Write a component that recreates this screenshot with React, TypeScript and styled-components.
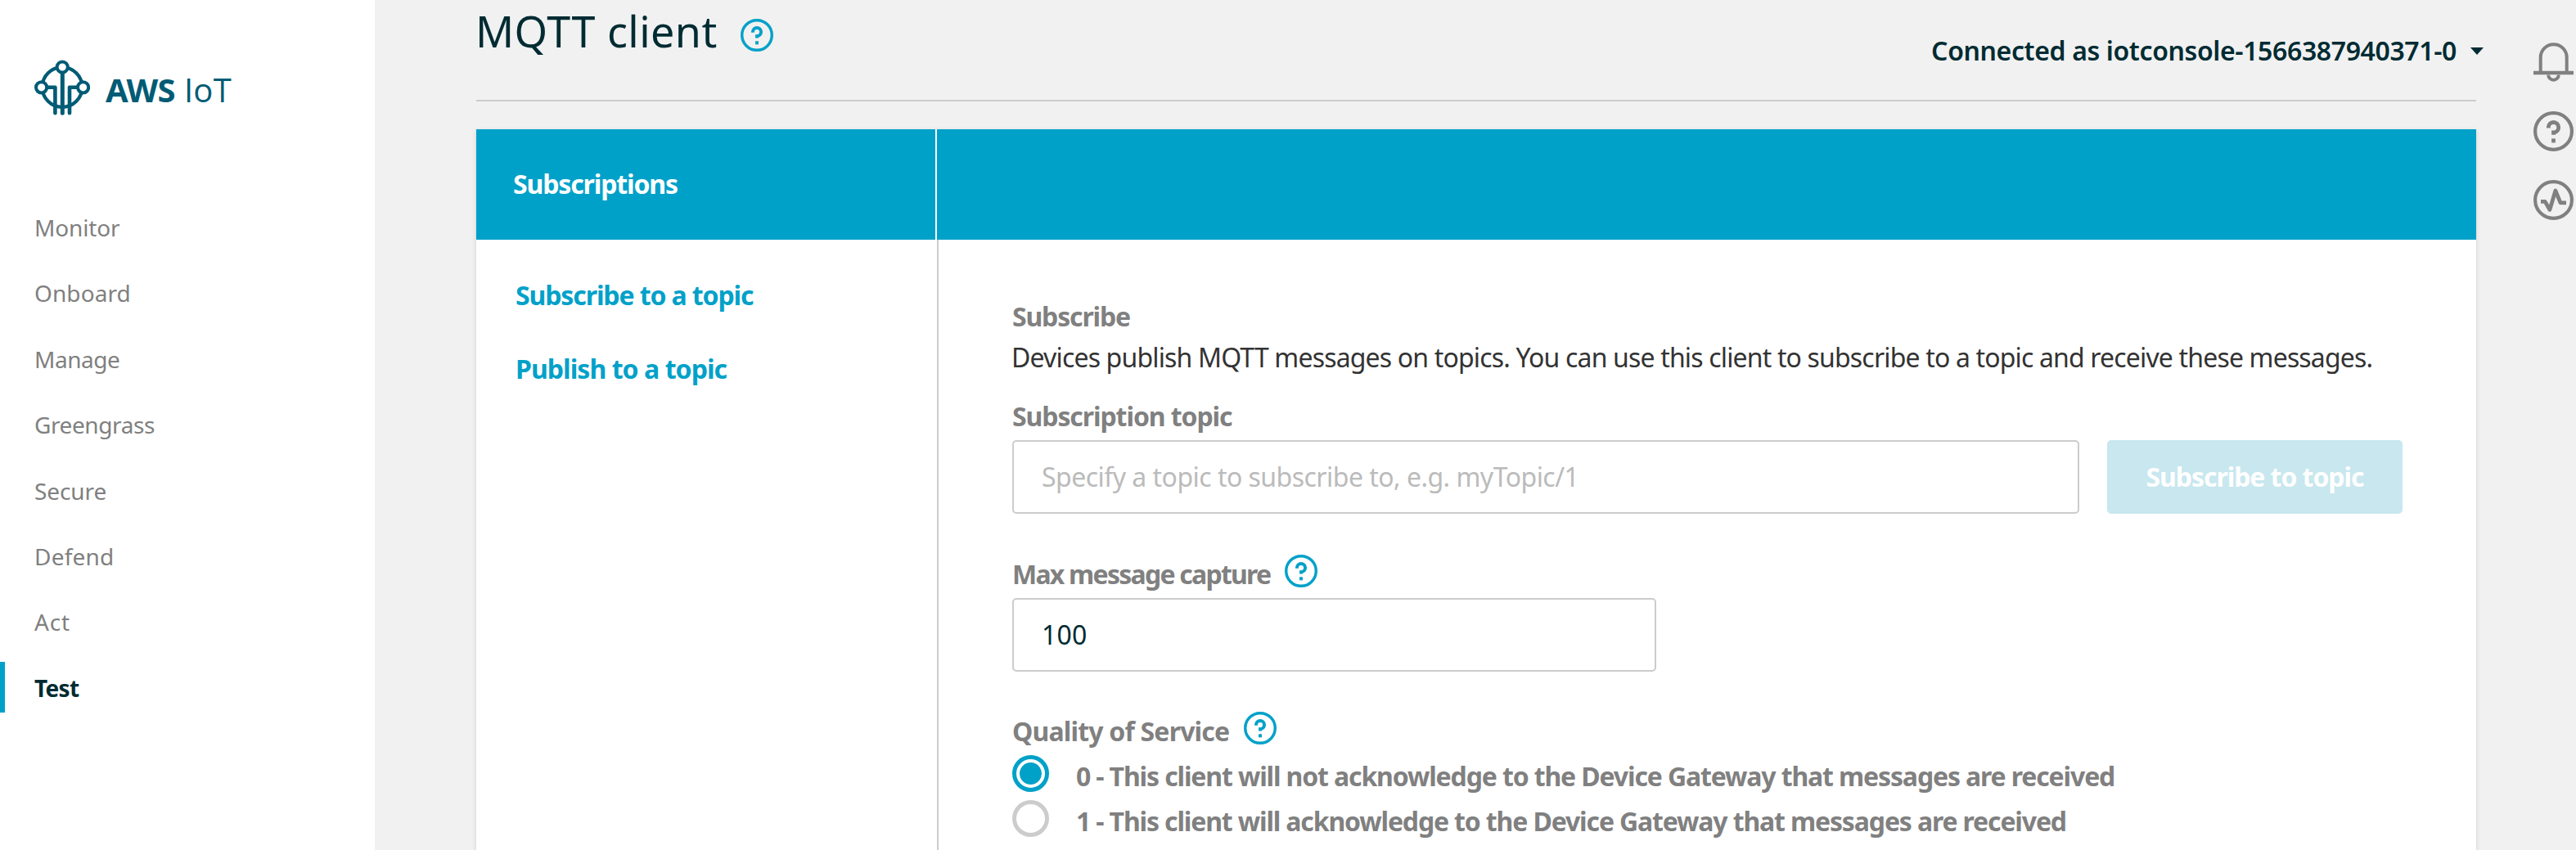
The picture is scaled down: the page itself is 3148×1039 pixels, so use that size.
import React from "react";
import styled, { createGlobalStyle } from "styled-components";

const teal = "#00a1c9";
const ink = "#002b32";
const grey = "#808080";
const line = "#cccccc";

const GlobalStyle = createGlobalStyle`
  * { box-sizing: border-box; }
  body {
    margin: 0;
    background: #f1f1f1;
    font-family: "Noto Sans", "Open Sans", sans-serif;
    font-size: 32px;
    color: ${ink};
  }
`;

const Page = styled.div`
  display: flex;
  height: 1039px;
  overflow: hidden;
`;

const Sidebar = styled.aside`
  flex: 0 0 458px;
  background: #fff;
  padding-top: 73px;
`;

const Logo = styled.div`
  display: flex;
  height: 68px;
  padding-left: 42px;
  color: #005b75;
  font-size: 40px;
  line-height: 74px;
`;

const LogoBold = styled.span`
  margin-left: 19px;
  font-weight: 700;
  letter-spacing: -0.6px;
`;

const LogoLight = styled.span`
  margin-left: 11px;
  font-family: "Open Sans", sans-serif;
  letter-spacing: 0.2px;
`;

const Nav = styled.nav`
  display: flex;
  flex-direction: column;
  gap: 18.4px;
  margin-top: 105px;
`;

const NavItem = styled.a<{ $active?: boolean; $track: number }>`
  height: 62px;
  padding: 1px 0 0 36px;
  border-left: 6px solid ${(p) => (p.$active ? teal : "transparent")};
  color: ${(p) => (p.$active ? ink : grey)};
  font-size: 28px;
  font-weight: ${(p) => (p.$active ? 700 : 400)};
  line-height: 62px;
  letter-spacing: ${(p) => p.$track}px;
`;

const Main = styled.main`
  flex: 1;
  display: flex;
  flex-direction: column;
  padding-left: 124px;
`;

const Header = styled.header`
  display: flex;
  justify-content: space-between;
  height: 124px;
  border-bottom: 2px solid ${line};
`;

const TitleGroup = styled.div`
  display: flex;
  align-items: center;
  height: 60px;
  margin-top: 8px;
  svg { margin: 9px 0 0 28px; }
`;

const Title = styled.h1`
  margin: 0 0 0 -1px;
  font-size: 52px;
  font-weight: 400;
  line-height: 60px;
  letter-spacing: 0.46px;
`;

const Connection = styled.div`
  display: flex;
  align-items: center;
  height: 50px;
  margin: 37px -9px 0 0;
  font-weight: 600;
  line-height: 50px;
  letter-spacing: -0.38px;
`;

const Caret = styled.span`
  margin-left: 17px;
  border: 8px solid transparent;
  border-top: 9px solid ${ink};
  border-bottom: 0;
`;

const Card = styled.section`
  flex: 1;
  display: flex;
  flex-direction: column;
  margin-top: 34px;
  background: #fff;
  box-shadow: 0 2px 6px rgba(0, 0, 0, 0.14);
`;

const CardHeader = styled.div`
  height: 135px;
  background: ${teal};
`;

const HeaderCell = styled.h2`
  width: 563px;
  height: 135px;
  margin: 0;
  padding-left: 45px;
  border-right: 2px solid #fff;
  color: #fff;
  font-size: 32px;
  font-weight: 700;
  line-height: 133px;
  letter-spacing: -1.13px;
`;

const CardBody = styled.div`
  flex: 1;
  display: flex;
`;

const LinkList = styled.div`
  width: 565px;
  display: flex;
  flex-direction: column;
  gap: 50px;
  padding: 48px 0 0 48px;
  border-right: 2px solid ${line};
`;

const TopicLink = styled.a<{ $track: number }>`
  color: ${teal};
  font-weight: 700;
  line-height: 40px;
  letter-spacing: ${(p) => p.$track}px;
`;

const Form = styled.div`
  flex: 1;
  padding: 69px 90px 0;
`;

const SectionTitle = styled.h3`
  margin: 0;
  color: ${grey};
  font-size: 32px;
  font-weight: 700;
  line-height: 50px;
  letter-spacing: -1.17px;
`;

const Description = styled.p`
  margin: 0 -40px 23px -1px;
  color: #333;
  line-height: 49px;
  letter-spacing: -0.84px;
  white-space: nowrap;
`;

const Label = styled.label<{ $track: number }>`
  display: flex;
  height: 54px;
  color: ${grey};
  font-weight: 700;
  line-height: 50px;
  letter-spacing: ${(p) => p.$track}px;
  svg { margin: 1px 0 0 18px; }
`;

const FieldRow = styled.div<{ $gap: number }>`
  display: flex;
  gap: 34px;
  margin-bottom: ${(p) => p.$gap}px;
`;

const TextInput = styled.input<{ $width?: string; $track?: number }>`
  width: ${(p) => p.$width ?? "auto"};
  flex: ${(p) => (p.$width ? "none" : "1")};
  height: 90px;
  padding: 0 34px 2px;
  border: 2px solid ${line};
  border-radius: 5px;
  outline: none;
  background: #fff;
  color: ${ink};
  font: inherit;
  letter-spacing: ${(p) => p.$track ?? 0}px;
  &::placeholder { color: #bbb; opacity: 1; }
`;

const SubscribeButton = styled.button`
  width: 361px;
  height: 90px;
  padding: 0 0 2px;
  border: 0;
  border-radius: 5px;
  background: #c8e7ee;
  color: #fff;
  font: inherit;
  font-weight: 700;
  letter-spacing: -1.07px;
`;

const Option = styled.div<{ $track: number }>`
  display: flex;
  height: 45px;
  margin-bottom: 10px;
  color: ${grey};
  font-weight: 700;
  line-height: 51px;
  letter-spacing: ${(p) => p.$track}px;
  white-space: nowrap;
`;

const Radio = styled.span<{ $on?: boolean }>`
  flex: 0 0 45px;
  height: 45px;
  margin-right: 33px;
  padding: 4px;
  border: 5px solid ${(p) => (p.$on ? teal : line)};
  border-radius: 50%;
  background: ${(p) => (p.$on ? teal : "#fff")};
  background-clip: content-box;
`;

const Tools = styled.div`
  flex: 0 0 122px;
  display: flex;
  flex-direction: column;
  align-items: center;
  gap: 35px;
  padding: 52px 3px 0 70px;
`;

const IotMark = () => (
  <svg width="68" height="68" viewBox="0 0 68 68" fill="none" stroke="currentColor" strokeLinecap="round">
    <circle cx="34" cy="33.6" r="24.4" strokeWidth="4.2" />
    <g fill="#fff" strokeWidth="4">
      <circle cx="34.2" cy="9" r="6.6" />
      <circle cx="8.6" cy="33.8" r="6.6" />
      <circle cx="59.6" cy="33.8" r="6.6" />
    </g>
    <path d="M34.3 17V65.2" strokeWidth="5" />
    <path d="M16 33.7H25.4V65.2M52.5 33.7H43V65.2" strokeWidth="4.6" strokeLinejoin="round" />
  </svg>
);

const HelpIcon = ({ size = 40, color = teal }: { size?: number; color?: string }) => (
  <svg width={size} height={size} viewBox="0 0 49 49" fill="none" stroke={color}>
    <circle cx="24.5" cy="24.5" r="22.4" strokeWidth="4.2" />
    <path d="M18.3 20.6V19.7a6.2 6.2 0 1 1 6.2 6.2V28.8" strokeWidth="4.8" />
    <rect x="22.1" y="33.4" width="4.8" height="5" fill={color} stroke="none" />
  </svg>
);

const BellIcon = () => (
  <svg width="49" height="49" viewBox="0 0 49 49" fill="none" stroke={grey} strokeWidth="4">
    <path d="M8.7 36V18.2a16 16 0 0 1 32 0V36" />
    <path d="M0 37H49" strokeWidth="4.6" />
    <path d="M18.2 39.5a6.3 6.3 0 0 0 12.6 0" />
  </svg>
);

const PulseIcon = () => (
  <svg width="49" height="49" viewBox="0 0 49 49" fill="none" stroke={grey}>
    <circle cx="24.5" cy="24.5" r="22.4" strokeWidth="4.2" />
    <path d="M9 26.4H14.2L19.9 36.4L26.9 13L33 27.8H40" strokeWidth="4.8" strokeLinejoin="round" />
  </svg>
);

const navItems: { name: string; track: number; active?: boolean }[] = [
  { name: "Monitor", track: -0.15 },
  { name: "Onboard", track: 0.08 },
  { name: "Manage", track: -0.47 },
  { name: "Greengrass", track: -0.4 },
  { name: "Secure", track: -0.08 },
  { name: "Defend", track: 0.21 },
  { name: "Act", track: 0.83 },
  { name: "Test", track: -0.66, active: true },
];

export default function App() {
  return (
    <>
      <GlobalStyle />
      <Page>
        <Sidebar>
          <Logo>
            <IotMark />
            <LogoBold>AWS</LogoBold>
            <LogoLight>IoT</LogoLight>
          </Logo>
          <Nav>
            {navItems.map((item) => (
              <NavItem key={item.name} $active={item.active} $track={item.track}>
                {item.name}
              </NavItem>
            ))}
          </Nav>
        </Sidebar>
        <Main>
          <Header>
            <TitleGroup>
              <Title>MQTT client</Title>
              <HelpIcon />
            </TitleGroup>
            <Connection>
              Connected as iotconsole-1566387940371-0
              <Caret />
            </Connection>
          </Header>
          <Card>
            <CardHeader>
              <HeaderCell>Subscriptions</HeaderCell>
            </CardHeader>
            <CardBody>
              <LinkList>
                <TopicLink $track={-1.11}>Subscribe to a topic</TopicLink>
                <TopicLink $track={-0.94}>Publish to a topic</TopicLink>
              </LinkList>
              <Form>
                <SectionTitle>Subscribe</SectionTitle>
                <Description>
                  Devices publish MQTT messages on topics. You can use this client to subscribe to a topic and receive these messages.
                </Description>
                <Label $track={-1.09}>Subscription topic</Label>
                <FieldRow $gap={49}>
                  <TextInput placeholder="Specify a topic to subscribe to, e.g. myTopic/1" $track={-0.53} />
                  <SubscribeButton>Subscribe to topic</SubscribeButton>
                </FieldRow>
                <Label $track={-1.76}>
                  Max message capture
                  <HelpIcon />
                </Label>
                <FieldRow $gap={48}>
                  <TextInput defaultValue="100" $width="787px" $track={0.2} />
                </FieldRow>
                <Label $track={-0.82}>
                  Quality of Service
                  <HelpIcon />
                </Label>
                <Option $track={-1.14}>
                  <Radio $on />
                  0 - This client will not acknowledge to the Device Gateway that messages are received
                </Option>
                <Option $track={-1.15}>
                  <Radio />
                  1 - This client will acknowledge to the Device Gateway that messages are received
                </Option>
              </Form>
            </CardBody>
          </Card>
        </Main>
        <Tools>
          <BellIcon />
          <HelpIcon size={49} color={grey} />
          <PulseIcon />
        </Tools>
      </Page>
    </>
  );
}
